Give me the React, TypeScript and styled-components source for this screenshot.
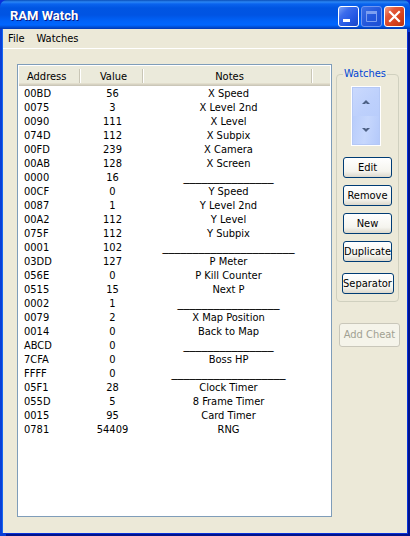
import React from "react";
import styled, { createGlobalStyle } from "styled-components";

const GlobalStyle = createGlobalStyle`
  * { box-sizing: border-box; }
  html, body { margin: 0; padding: 0; }
  body {
    font-family: Tahoma, "DejaVu Sans Condensed", "DejaVu Sans", sans-serif;
    font-size: 11px;
    line-height: 14px;
    color: #000;
    background: #0831d9;
  }
  button { font: inherit; color: inherit; margin: 0; padding: 0; }
`;

const Window = styled.main`
  display: flex;
  flex-direction: column;
  min-height: 100vh;
  background: #0a3fd6;
  border-radius: 7px 7px 0 0;
`;

const TitleBar = styled.header`
  display: flex;
  align-items: center;
  height: 29px;
  padding: 3px 5px 0 10px;
  border-radius: 7px 7px 0 0;
  background: linear-gradient(
    #0a4fb8 0px, #2a86f5 2px, #0a63ee 4px, #0055e2 8px,
    #0054e3 15px, #0062f8 21px, #0066ff 25px, #0050d8 27px, #0038b4 29px
  );
`;

const Title = styled.h1`
  flex: 1;
  margin: 0;
  color: #fff;
  font: bold 13px/18px "Trebuchet MS", Roboto, sans-serif;
  text-shadow: 1px 1px 0 #0a1883;
`;

const Captions = styled.div`
  display: flex;
  gap: 2px;
`;

const CaptionButton = styled.button<{ $kind: "normal" | "dim" | "close" }>`
  display: flex;
  width: 21px;
  height: 21px;
  border: 1px solid ${(p) => (p.$kind === "dim" ? "#6f96f0" : "#fff")};
  border-radius: 3px;
  background: ${(p) =>
    p.$kind === "close"
      ? "linear-gradient(135deg, #f0a088 0%, #e2583a 30%, #d8421c 65%, #b93410 100%)"
      : p.$kind === "dim"
        ? "linear-gradient(135deg, #3c70e6 0%, #2458dc 50%, #1c4ed4 100%)"
        : "linear-gradient(135deg, #7ea4f6 0%, #3c6cec 30%, #2458e4 65%, #1a46c4 100%)"};
  svg { display: block; }
`;

const Client = styled.div`
  display: flex;
  flex: 1;
  flex-direction: column;
  margin: 0 3px 3px;
  background: #ece9d8;
  box-shadow: 1px 1px 0 #0831d9, 3px 3px 0 #00138c, -1px 0 0 #1666f0;
`;

const MenuBar = styled.nav`
  display: flex;
  height: 20px;
  padding: 0 1px;
  border-bottom: 1px solid #fff;
`;

const MenuItem = styled.button`
  padding: 0 4px;
  margin-right: 4px;
  border: 0;
  background: none;
`;

const Body = styled.div`
  display: flex;
  flex: 1;
  gap: 4px;
  padding: 15px 7px 16px 14px;
`;

const ListView = styled.section`
  flex: 1;
  min-width: 0;
  padding: 1px;
  border: 1px solid #7f9db9;
  background: #fff;
`;

const Table = styled.table`
  width: 100%;
  table-layout: fixed;
  border-collapse: collapse;
  text-align: center;
  white-space: nowrap;
`;

const Column = styled.col<{ $width?: number }>`
  width: ${(p) => (p.$width ? `${p.$width}px` : "auto")};
`;

const HeadCell = styled.th<{ $left?: boolean }>`
  height: 21px;
  padding: ${(p) => (p.$left ? "0 0 0 8px" : "0 0 0 2px")};
  text-align: ${(p) => (p.$left ? "left" : "center")};
  font-weight: normal;
  background:
    linear-gradient(#c9c6b6, #c9c6b6) right 1px top 3px / 1px 14px no-repeat,
    linear-gradient(#fff, #fff) right 0 top 3px / 1px 14px no-repeat,
    linear-gradient(#ebeadb 0 17px, #e2decd 17px 18px, #d6d2c2 18px 19px, #cbc7b8 19px 20px, #fff 20px);
`;

const TailCell = styled.td`
  height: 21px;
  padding: 0;
  background: linear-gradient(#ebeadb 0 17px, #e2decd 17px 18px, #d6d2c2 18px 19px, #cbc7b8 19px 20px, #fff 20px);
`;

const Cell = styled.td<{ $left?: boolean }>`
  height: 14px;
  padding: ${(p) => (p.$left ? "0 0 0 5px" : "0")};
  text-align: ${(p) => (p.$left ? "left" : "center")};
`;

const Rule = styled.span`
  display: block;
  height: 14px;
  font: 12px/12px "DejaVu Sans", sans-serif;
`;

const Side = styled.aside`
  display: flex;
  flex-direction: column;
  align-items: flex-end;
  gap: 21px;
  width: 64px;
  padding-top: 3px;
`;

const Group = styled.fieldset`
  display: flex;
  flex-direction: column;
  align-items: center;
  align-self: flex-start;
  width: 63px;
  min-width: 0;
  margin: 0;
  padding: 5px 0 7px;
  border: 1px solid #d0d0bf;
  border-radius: 4px;
`;

const Legend = styled.legend`
  margin-left: 6px;
  padding: 0 1px;
  color: #0046d5;
`;

const Spinner = styled.div`
  display: flex;
  flex-direction: column;
  width: 30px;
  height: 60px;
  margin: 0 3px 11px 0;
  border: 1px solid #fff;
`;

const SpinButton = styled.button<{ $down?: boolean }>`
  display: flex;
  flex: 1;
  align-items: center;
  justify-content: center;
  border: 1px solid #b4c8f6;
  border-width: ${(p) => (p.$down ? "0 1px 1px" : "1px 1px 0")};
  background: ${(p) =>
    p.$down
      ? "linear-gradient(100deg, #b9cdfb, #c6d7fd 50%, #b4c9fa)"
      : "linear-gradient(135deg, #cad9fd, #bdd0fc 60%, #b9cdfb)"};
`;

const Stack = styled.div`
  display: flex;
  flex-direction: column;
  align-items: center;
  gap: 7px;
  margin-bottom: 11px;
`;

const PushButton = styled.button<{ $width: number }>`
  width: ${(p) => p.$width}px;
  height: 21px;
  border: 1px solid #003c74;
  border-radius: 3px;
  background: linear-gradient(#fff, #f5f4ee 70%, #dcd8cc);
  white-space: nowrap;
  display: flex;
  align-items: center;
  justify-content: center;

  &:disabled {
    height: 24px;
    border-color: #c9c7ba;
    background: #f5f4ea;
    color: #a1a192;
  }
`;

type Watch = { address: string; value: number; note: string };

const line = (length: number) => "_".repeat(length);

const watches: Watch[] = [
  { address: "00BD", value: 56, note: "X Speed" },
  { address: "0075", value: 3, note: "X Level 2nd" },
  { address: "0090", value: 111, note: "X Level" },
  { address: "074D", value: 112, note: "X Subpix" },
  { address: "00FD", value: 239, note: "X Camera" },
  { address: "00AB", value: 128, note: "X Screen" },
  { address: "0000", value: 16, note: line(15) },
  { address: "00CF", value: 0, note: "Y Speed" },
  { address: "0087", value: 1, note: "Y Level 2nd" },
  { address: "00A2", value: 112, note: "Y Level" },
  { address: "075F", value: 112, note: "Y Subpix" },
  { address: "0001", value: 102, note: line(22) },
  { address: "03DD", value: 127, note: "P Meter" },
  { address: "056E", value: 0, note: "P Kill Counter" },
  { address: "0515", value: 15, note: "Next P" },
  { address: "0002", value: 1, note: line(17) },
  { address: "0079", value: 2, note: "X Map Position" },
  { address: "0014", value: 0, note: "Back to Map" },
  { address: "ABCD", value: 0, note: line(15) },
  { address: "7CFA", value: 0, note: "Boss HP" },
  { address: "FFFF", value: 0, note: line(19) },
  { address: "05F1", value: 28, note: "Clock Timer" },
  { address: "055D", value: 5, note: "8 Frame Timer" },
  { address: "0015", value: 95, note: "Card Timer" },
  { address: "0781", value: 54409, note: "RNG" },
];

export default function App() {
  return (
    <>
      <GlobalStyle />
      <Window>
        <TitleBar>
          <Title>RAM Watch</Title>
          <Captions>
            <CaptionButton $kind="normal" aria-label="Minimize">
              <svg width="19" height="19"><rect x="4" y="12" width="7" height="3" fill="#fff" /></svg>
            </CaptionButton>
            <CaptionButton $kind="dim" aria-label="Maximize" disabled>
              <svg width="19" height="19">
                <path d="M4.5 5v9.5h10V5" fill="none" stroke="#7d9ff0" />
                <rect x="4" y="4" width="11" height="3" fill="#7d9ff0" />
              </svg>
            </CaptionButton>
            <CaptionButton $kind="close" aria-label="Close">
              <svg width="19" height="19">
                <path d="M5 5l9 9M14 5l-9 9" fill="none" stroke="#fff" strokeWidth="2.2" strokeLinecap="square" />
              </svg>
            </CaptionButton>
          </Captions>
        </TitleBar>
        <Client>
          <MenuBar>
            <MenuItem>File</MenuItem>
            <MenuItem>Watches</MenuItem>
          </MenuBar>
          <Body>
            <ListView>
              <Table>
                <colgroup>
                  <Column $width={62} />
                  <Column $width={63} />
                  <Column />
                  <Column $width={17} />
                </colgroup>
                <thead>
                  <tr>
                    <HeadCell scope="col" $left>Address</HeadCell>
                    <HeadCell scope="col">Value</HeadCell>
                    <HeadCell scope="col">Notes</HeadCell>
                    <TailCell />
                  </tr>
                </thead>
                <tbody>
                  {watches.map((w) => (
                    <tr key={w.address}>
                      <Cell $left>{w.address}</Cell>
                      <Cell>{w.value}</Cell>
                      <Cell>{w.note.startsWith("_") ? <Rule>{w.note}</Rule> : w.note}</Cell>
                    </tr>
                  ))}
                </tbody>
              </Table>
            </ListView>
            <Side>
              <Group>
                <Legend>Watches</Legend>
                <Spinner>
                  <SpinButton aria-label="Move up">
                    <svg width="8" height="4"><path d="M0 4L4 0L8 4H5L4 3L3 4Z" fill="#4d6185" /></svg>
                  </SpinButton>
                  <SpinButton $down aria-label="Move down">
                    <svg width="8" height="4"><path d="M0 0L4 4L8 0H5L4 1L3 0Z" fill="#4d6185" /></svg>
                  </SpinButton>
                </Spinner>
                <Stack>
                  <PushButton $width={49}>Edit</PushButton>
                  <PushButton $width={49}>Remove</PushButton>
                  <PushButton $width={49}>New</PushButton>
                  <PushButton $width={49}>Duplicate</PushButton>
                </Stack>
                <PushButton $width={52}>Separator</PushButton>
              </Group>
              <PushButton $width={61} disabled>Add Cheat</PushButton>
            </Side>
          </Body>
        </Client>
      </Window>
    </>
  );
}
